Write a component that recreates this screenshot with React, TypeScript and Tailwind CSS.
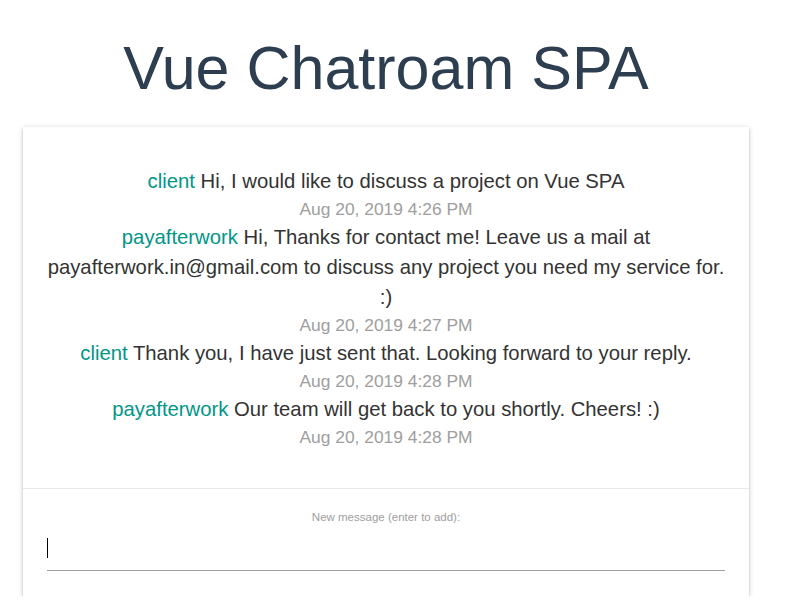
import { useState } from "react";

const messages = [
  {
    user: "client",
    text: "Hi, I would like to discuss a project on Vue SPA",
    time: "Aug 20, 2019 4:26 PM",
  },
  {
    user: "payafterwork",
    text: "Hi, Thanks for contact me! Leave us a mail at payafterwork.in@gmail.com to discuss any project you need my service for. :)",
    time: "Aug 20, 2019 4:27 PM",
  },
  {
    user: "client",
    text: "Thank you, I have just sent that. Looking forward to your reply.",
    time: "Aug 20, 2019 4:28 PM",
  },
  {
    user: "payafterwork",
    text: "Our team will get back to you shortly. Cheers! :)",
    time: "Aug 20, 2019 4:28 PM",
  },
];

const App = () => {
  const [draft, setDraft] = useState("");

  return (
    <div className="w-[772px] bg-white font-['Liberation_Sans',Arial,sans-serif]">
      <h1 className="pt-[38px] text-center text-[61px] leading-none text-[#2c3e50]">
        Vue Chatroam SPA
      </h1>

      <div className="mx-[23px] mt-[28px] bg-white shadow-[0_2px_2px_0_rgba(0,0,0,0.14),0_3px_1px_-2px_rgba(0,0,0,0.12),0_1px_5px_0_rgba(0,0,0,0.2)]">
        <ul className="px-6 pt-[39px] pb-[38px] text-center">
          {messages.map((m, i) => (
            <li key={i}>
              <div className="text-[20.3px] leading-[30px] text-[#333]">
                <span className="text-[#009688]">{m.user}</span> {m.text}
              </div>
              <div className="text-[17.4px] leading-[26px] text-[#9e9e9e]">{m.time}</div>
            </li>
          ))}
        </ul>

        <div className="border-t border-[#e8e8e8] px-6 pt-[20px] pb-[25px]">
          <div className="text-center text-[11.5px] leading-[16px] text-[#9e9e9e]">
            New message (enter to add):
          </div>
          <div className="mt-px flex h-[45px] items-center border-b border-[#9e9e9e]">
            <span className="h-[20px] w-px bg-black" />
            <input
              value={draft}
              onChange={(e) => setDraft(e.target.value)}
              className="h-full flex-1 bg-transparent text-[16px] outline-none"
            />
          </div>
        </div>
      </div>
    </div>
  );
};

export default App;
